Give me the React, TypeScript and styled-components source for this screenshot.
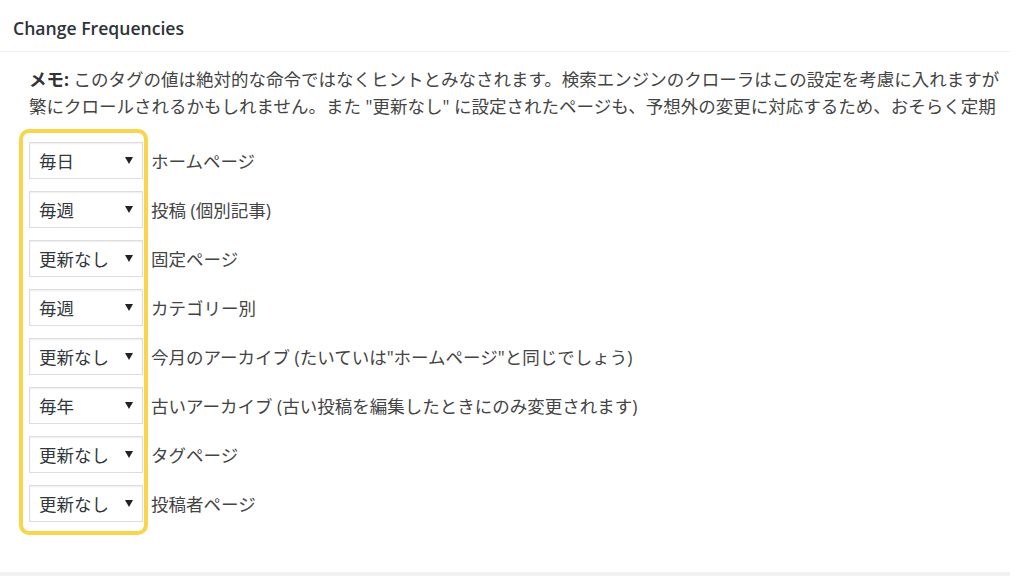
import React from "react";
import styled, { createGlobalStyle } from "styled-components";

const GlobalStyle = createGlobalStyle`
  html, body { margin: 0; padding: 0; background: #fff; }
  body {
    font-family: "Open Sans", "Noto Sans CJK JP", sans-serif;
    color: #444;
  }
`;

const Panel = styled.section`
  width: 1010px;
  height: 572px;
  background: #fff;
  border-bottom: 4px solid #f1f1f1;
  overflow: hidden;
`;

const Header = styled.h2`
  margin: 0;
  height: 52px;
  box-sizing: border-box;
  padding: 5px 0 0 13px;
  display: flex;
  align-items: center;
  border-bottom: 1px solid #eeeeee;
  font-family: "Open Sans", sans-serif;
  font-weight: 600;
  font-size: 17.6px;
  color: #2e3338;
`;

const Body = styled.div`
  padding: 14px 0 0 29px;
`;

const Memo = styled.p`
  margin: 0;
  font-size: 17.5px;
  line-height: 27px;
  color: #444;
  white-space: nowrap;
`;

const MemoLine = styled.span`
  display: block;
`;

const Strong = styled.strong`
  font-weight: 700;
  color: #333;
`;

const Rows = styled.div`
  position: relative;
  margin-top: 22px;
  display: flex;
  flex-direction: column;
  gap: 12px;
`;

const Highlight = styled.div`
  position: absolute;
  left: -10px;
  top: -13px;
  width: 129px;
  height: 406px;
  box-sizing: border-box;
  border: 4px solid #f8d54c;
  border-radius: 10px;
  pointer-events: none;
`;

const Row = styled.div`
  display: flex;
  align-items: center;
  gap: 8px;
  height: 37px;
`;

const SelectBox = styled.div`
  width: 114px;
  height: 37px;
  box-sizing: border-box;
  border: 1px solid #dddddd;
  background: #fff;
  box-shadow: inset 0 1px 2px rgba(0, 0, 0, 0.07);
  display: flex;
  align-items: center;
  justify-content: space-between;
  padding: 0 9px 0 9px;
  font-size: 17.5px;
  color: #32373c;
`;

const Arrow = styled.svg`
  width: 8px;
  height: 7px;
  flex: none;
`;

const Label = styled.span`
  font-size: 17.5px;
  color: #444;
  white-space: nowrap;
`;

const rows: { value: string; label: string }[] = [
  { value: "毎日", label: "ホームページ" },
  { value: "毎週", label: "投稿 (個別記事)" },
  { value: "更新なし", label: "固定ページ" },
  { value: "毎週", label: "カテゴリー別" },
  { value: "更新なし", label: "今月のアーカイブ (たいていは\"ホームページ\"と同じでしょう)" },
  { value: "毎年", label: "古いアーカイブ (古い投稿を編集したときにのみ変更されます)" },
  { value: "更新なし", label: "タグページ" },
  { value: "更新なし", label: "投稿者ページ" },
];

export default function App() {
  return (
    <>
      <GlobalStyle />
      <Panel>
        <Header>Change Frequencies</Header>
        <Body>
          <Memo>
            <MemoLine>
              <Strong>メモ:</Strong> このタグの値は絶対的な命令ではなくヒントとみなされます。検索エンジンのクローラはこの設定を考慮に入れますが
            </MemoLine>
            <MemoLine>
              繁にクロールされるかもしれません。また "更新なし" に設定されたページも、予想外の変更に対応するため、おそらく定期
            </MemoLine>
          </Memo>
          <Rows>
            <Highlight />
            {rows.map((r, i) => (
              <Row key={i}>
                <SelectBox>
                  <span>{r.value}</span>
                  <Arrow viewBox="0 0 8 7">
                    <path d="M0 0 H8 L4 7 Z" fill="#222" />
                  </Arrow>
                </SelectBox>
                <Label>{r.label}</Label>
              </Row>
            ))}
          </Rows>
        </Body>
      </Panel>
    </>
  );
}
